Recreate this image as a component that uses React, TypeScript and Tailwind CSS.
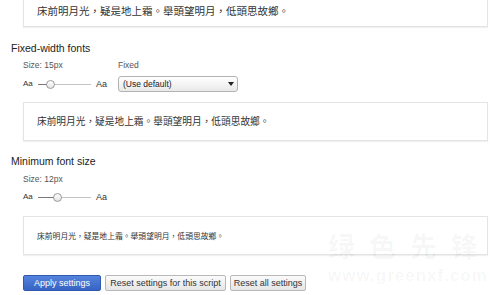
const poem = '床前明月光，疑是地上霜。舉頭望明月，低頭思故鄉。'

function SizeSlider({ knob }: { knob: number }) {
  return (
    <div className="flex items-center w-[95px]">
      <span className="text-[8px] w-[15px] leading-none">Aa</span>
      <div className="relative w-[53px] h-[1px] bg-[#c4c4c4]">
        <div className="absolute left-0 top-0 h-[1px] bg-[#7a7a7a]" style={{ width: knob }} />
        <div
          className="absolute top-[-4px] w-[9px] h-[9px] rounded-full border border-[#9a9a9a] bg-gradient-to-b from-white to-[#e4e4e4]"
          style={{ left: knob - 4 }}
        />
      </div>
      <span className="text-[9px] ml-[5px] leading-none">Aa</span>
    </div>
  )
}

function PreviewBox({ size, className = '' }: { size: string; className?: string }) {
  return (
    <div
      className={`ml-[23px] w-[465px] h-[39px] flex items-center pl-[13px] bg-white border border-[#e4e4e4] shadow-[0_1px_1px_rgba(0,0,0,0.06)] ${className}`}
    >
      <span
        className={`${size} text-[#333] whitespace-nowrap`}
        style={{ fontFamily: '"Noto Sans CJK TC", "Noto Sans CJK SC", sans-serif' }}
      >
        {poem}
      </span>
    </div>
  )
}

export default function App() {
  return (
    <div
      className="relative w-[498px] h-[295px] overflow-hidden bg-white text-[#333]"
      style={{ fontFamily: '"Liberation Sans", Arial, sans-serif' }}
    >
      {/* Standard font preview (scrolled) */}
      <PreviewBox size="text-[10.5px]" className="mt-[-12px] pt-[6px]" />

      {/* Fixed-width fonts */}
      <h2 className="pl-[11px] mt-[15px] text-[10.5px] leading-[13px] text-[#222]">Fixed-width fonts</h2>
      <div className="flex pl-[23px] mt-[5px] text-[8.5px] leading-[11px] text-[#555]">
        <span className="w-[95px]">Size: 15px</span>
        <span>Fixed</span>
      </div>
      <div className="flex items-center pl-[23px] mt-[5px] h-[16px]">
        <SizeSlider knob={12} />
        <div className="relative w-[120px] h-[16px] flex items-center pl-[4px] rounded-[3px] border border-[#b3b3b3] bg-gradient-to-b from-white to-[#e9e9e9] text-[8.5px] text-[#222]">
          (Use default)
          <span className="absolute right-[3px] top-[5px] w-0 h-0 border-l-[3px] border-r-[3px] border-t-[4px] border-l-transparent border-r-transparent border-t-[#222]" />
        </div>
      </div>
      <PreviewBox size="text-[9.7px]" className="mt-[10px]" />

      {/* Minimum font size */}
      <h2 className="pl-[11px] mt-[14px] text-[10.5px] leading-[13px] text-[#222]">Minimum font size</h2>
      <div className="pl-[23px] mt-[6px] text-[8.5px] leading-[11px] text-[#555]">Size: 12px</div>
      <div className="flex items-center pl-[23px] mt-[4px] h-[16px]">
        <SizeSlider knob={19} />
      </div>
      <PreviewBox size="text-[7.8px]" className="mt-[11px] h-[38px]" />

      {/* Actions */}
      <div className="flex gap-[4px] pl-[23px] mt-[20px]">
        <button className="w-[78px] h-[16px] rounded-[2px] border border-[#2f58b0] bg-gradient-to-b from-[#5483dc] to-[#3764c4] text-white text-[9px] leading-none">
          Apply settings
        </button>
        <button className="w-[121px] h-[16px] rounded-[2px] border border-[#b8b8b8] bg-gradient-to-b from-[#fbfbfb] to-[#e5e5e5] text-[#333] text-[9px] leading-none">
          Reset settings for this script
        </button>
        <button className="w-[76px] h-[16px] rounded-[2px] border border-[#b8b8b8] bg-gradient-to-b from-[#fbfbfb] to-[#e5e5e5] text-[#333] text-[9px] leading-none">
          Reset all settings
        </button>
      </div>

      {/* Watermark */}
      <div className="absolute left-[328px] top-[232px] pointer-events-none select-none text-[rgba(0,0,0,0.04)] font-bold">
        <div
          className="text-[27px] leading-[27px] tracking-[14px]"
          style={{ fontFamily: '"Noto Sans CJK SC", sans-serif' }}
        >
          绿色先锋
        </div>
        <div className="text-[17px] leading-[15px] mt-[9px] tracking-[1px]">www.greenxf.com</div>
      </div>
    </div>
  )
}
